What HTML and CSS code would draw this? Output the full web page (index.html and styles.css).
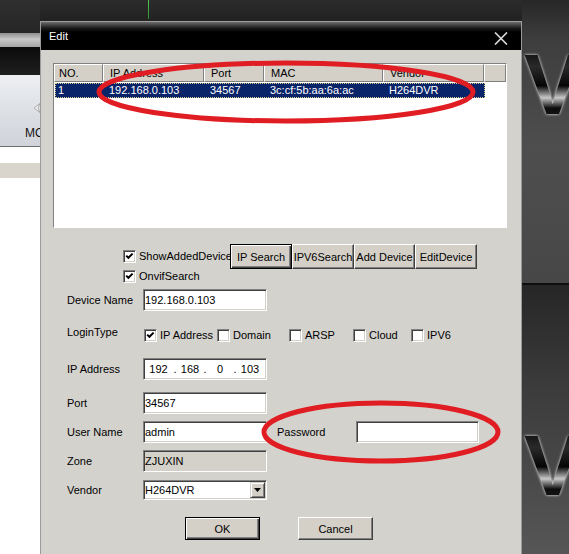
FILE: index.html
```html
<!DOCTYPE html>
<html>
<head>
<meta charset="utf-8">
<title>Edit</title>
<link rel="stylesheet" href="styles.css">
</head>
<body>
<div class="screen">
  <div class="left">
    <div class="l-dark"></div>
    <div class="l-band"></div>
    <div class="l-dark2"></div>
    <div class="l-panel">
      <svg class="l-icon" width="8" height="10" viewBox="0 0 8 10"><polygon points="7,0.5 1,5 7,9.5 5,5" fill="#f2f2f2" stroke="#9c9c9c" stroke-width="0.8"/></svg>
      <span class="l-mo">MO</span>
    </div>
    <div class="l-white"></div>
    <div class="l-stripe"></div>
    <div class="l-rest"></div>
  </div>

  <div class="mid">
    <div class="topgap"><div class="green"></div></div>
    <div class="dialog">
      <div class="titlebar">
        <span class="title">Edit</span>
        <svg class="close" width="14" height="13" viewBox="0 0 14 13"><path d="M1 0.5 L13 12.5 M13 0.5 L1 12.5" stroke="#d6d6d6" stroke-width="1.7" fill="none"/></svg>
      </div>
      <div class="body">
        <div class="list">
          <div class="lhead">
            <div class="hc w1 first">NO.</div>
            <div class="hc w2">IP Address</div>
            <div class="hc w3">Port</div>
            <div class="hc w4">MAC</div>
            <div class="hc w5">Vendor</div>
            <div class="hc w6"></div>
          </div>
          <div class="lrow">
            <div class="rc r1">1</div>
            <div class="rc w2">192.168.0.103</div>
            <div class="rc w3">34567</div>
            <div class="rc w4">3c:cf:5b:aa:6a:ac</div>
            <div class="rc w5">H264DVR</div>
          </div>
        </div>

        <div class="searchrow">
          <div class="chk">
            <span class="cb"><svg width="11" height="11" viewBox="0 0 11 11"><path d="M2.2 4.6 L4.4 6.8 L8.6 2.6" stroke="#000" stroke-width="2" fill="none"/></svg></span>
            <span class="cbl clip">ShowAddedDevice</span>
          </div>
          <button class="btn def b62">IP Search</button>
          <button class="btn b62">IPV6Search</button>
          <button class="btn b61">Add Device</button>
          <button class="btn b62">EditDevice</button>
        </div>
        <div class="onvifrow">
          <div class="chk">
            <span class="cb"><svg width="11" height="11" viewBox="0 0 11 11"><path d="M2.2 4.6 L4.4 6.8 L8.6 2.6" stroke="#000" stroke-width="2" fill="none"/></svg></span>
            <span class="cbl">OnvifSearch</span>
          </div>
        </div>

        <div class="frow r-dev">
          <span class="flabel">Device Name</span>
          <div class="field">192.168.0.103</div>
        </div>

        <div class="frow r-login">
          <span class="flabel top">LoginType</span>
          <div class="opts">
            <div class="chk o1">
              <span class="cb"><svg width="11" height="11" viewBox="0 0 11 11"><path d="M2.2 4.6 L4.4 6.8 L8.6 2.6" stroke="#000" stroke-width="2" fill="none"/></svg></span>
              <span class="cbl clip">IP Address</span>
            </div>
            <div class="chk o2"><span class="cb"></span><span class="cbl">Domain</span></div>
            <div class="chk o3"><span class="cb"></span><span class="cbl">ARSP</span></div>
            <div class="chk o4"><span class="cb"></span><span class="cbl">Cloud</span></div>
            <div class="chk o5"><span class="cb"></span><span class="cbl">IPV6</span></div>
          </div>
        </div>

        <div class="frow r-ip">
          <span class="flabel">IP Address</span>
          <div class="field ipf">
            <span class="oct o-first">192</span><span class="dot">.</span><span class="oct">168</span><span class="dot">.</span><span class="oct">0</span><span class="dot">.</span><span class="oct">103</span>
          </div>
        </div>

        <div class="frow r-port">
          <span class="flabel">Port</span>
          <div class="field">34567</div>
        </div>

        <div class="frow r-user">
          <span class="flabel">User Name</span>
          <div class="field">admin</div>
          <span class="pwlabel">Password</span>
          <div class="field pw"></div>
        </div>

        <div class="frow r-zone">
          <span class="flabel">Zone</span>
          <div class="field dis">ZJUXIN</div>
        </div>

        <div class="frow r-vendor">
          <span class="flabel">Vendor</span>
          <div class="field sel">
            <span>H264DVR</span>
            <span class="dd"><svg width="7" height="4" viewBox="0 0 7 4"><polygon points="0,0 7,0 3.5,4" fill="#000"/></svg></span>
          </div>
        </div>

        <div class="actions">
          <button class="btn def big">OK</button>
          <button class="btn big">Cancel</button>
        </div>
      </div>
    </div>
  </div>

  <div class="right">
    <div class="r-top"><span class="logo">V</span></div>
    <div class="r-line"></div>
    <div class="r-bottom"><span class="logo">V</span></div>
  </div>

  <svg class="marks" width="569" height="554" viewBox="0 0 569 554">
    <ellipse cx="286" cy="92" rx="187" ry="29" fill="none" stroke="#e11d24" stroke-width="5"/>
    <ellipse cx="381" cy="432" rx="117" ry="29" fill="none" stroke="#e11d24" stroke-width="5"/>
  </svg>
</div>
</body>
</html>
```

FILE: styles.css
```css
* { box-sizing: border-box; }
html, body { margin: 0; padding: 0; }
body {
  background: #1e1e1e;
  font-family: "Liberation Sans", Arial, sans-serif;
  font-size: 11px;
  color: #000;
}
.screen {
  position: relative;
  width: 569px;
  height: 554px;
  overflow: hidden;
  display: grid;
  grid-template-columns: 40px 482px 47px;
}

/* left background window */
.left { display: flex; flex-direction: column; overflow: hidden; }
.l-dark { height: 33px; flex: none; background: linear-gradient(#2f2f2f, #262626); }
.l-band { height: 14px; flex: none; background: linear-gradient(#8e8e8e, #c8c8c8 45%, #a4a4a4); }
.l-dark2 { height: 28px; flex: none; background: linear-gradient(#0b0b0b, #1f1f1f); }
.l-panel {
  height: 72px;
  flex: none;
  background: linear-gradient(#eef0f3, #dadde2 60%, #d0d3d9);
  border-bottom: 1px solid #6e6e6e;
  display: flex;
  flex-direction: column;
  justify-content: space-between;
  padding: 28px 0 7px 0;
  white-space: nowrap;
}
.l-icon { display: block; margin-left: 33px; }
.l-mo { display: block; margin-left: 25px; font-size: 12px; line-height: 12px; color: #111; }
.l-white { height: 16px; flex: none; background: #fff; }
.l-stripe { height: 15px; flex: none; background: #d9d5cd; }
.l-rest { flex: 1; background: #fff; }

/* middle */
.mid { display: flex; flex-direction: column; }
.topgap { height: 21px; flex: none; background: linear-gradient(#2c2c2c, #212121); }
.green { width: 1px; height: 19px; margin-left: 108px; background: linear-gradient(#4fd04f, #2f8a2f); }

.dialog {
  flex: 1;
  background: #d4d2cd;
  border-left: 1px solid #9a9a9a;
  border-right: 1px solid #9a9a9a;
  display: flex;
  flex-direction: column;
}
.titlebar {
  height: 29px;
  flex: none;
  background: linear-gradient(#d0d0d0 0, #6c6c6c 1px, #1c1c1c 7px, #000 11px);
  display: flex;
  justify-content: space-between;
  align-items: flex-start;
  padding: 0 13px 0 8px;
}
.title { color: #fff; line-height: 12px; margin-top: 9px; }
.close { display: block; margin-top: 11px; }

.body {
  flex: 1;
  display: flex;
  flex-direction: column;
  padding: 13px 14px 0 12px;
}

/* list view */
.list {
  width: 454px;
  height: 165px;
  flex: none;
  background: #fff;
  border: 1px solid;
  border-color: #808080 #fff #fff #808080;
}
.lhead { display: flex; height: 18px; }
.hc {
  height: 18px;
  background: #d4d0c8;
  border: 1px solid;
  border-color: #fff #808080 #808080 #fff;
  padding-left: 6px;
  line-height: 16px;
  white-space: nowrap;
  overflow: hidden;
}
.hc.first { padding-left: 4px; }
.w1 { width: 49px; }
.w2 { width: 101px; }
.w3 { width: 60px; }
.w4 { width: 119px; }
.w5 { width: 101px; }
.w6 { width: 22px; }
.lrow {
  display: flex;
  width: 430px;
  height: 15px;
  margin: 1px 0 0 1px;
  background: #0a246a;
  color: #fff;
  border: 1px dotted #d9cf8e;
  line-height: 13px;
}
.rc { padding-left: 6px; white-space: nowrap; overflow: hidden; }
.rc.r1 { width: 47px; padding-left: 2px; }

/* checkboxes */
.chk { display: flex; align-items: center; gap: 3px; }
.cb {
  width: 13px;
  height: 13px;
  flex: none;
  background: #fff;
  border: 1px solid;
  border-color: #808080 #fff #fff #808080;
  box-shadow: inset 1px 1px #404040, inset -1px -1px #d4d0c8;
  display: flex;
}
.cb svg { display: block; }
.cbl { white-space: nowrap; line-height: 13px; }
.clip { overflow: hidden; }
.searchrow .clip { width: 91px; }

/* buttons */
.btn {
  font-family: "Liberation Sans", Arial, sans-serif;
  font-size: 11px;
  color: #000;
  background: #d4d0c8;
  border: 1px solid;
  border-color: #fff #404040 #404040 #fff;
  box-shadow: inset -1px -1px #808080;
  padding: 0;
  height: 25px;
  white-space: nowrap;
}
.btn.def {
  border-color: #000;
  box-shadow: inset 1px 1px #fff, inset -1px -1px #404040, inset -2px -2px #808080;
}
.b62 { width: 62px; }
.b61 { width: 61px; }

.searchrow {
  display: flex;
  align-items: center;
  height: 25px;
  margin: 16px 0 0 70px;
  flex: none;
}
.onvifrow {
  display: flex;
  align-items: center;
  height: 15px;
  margin-left: 70px;
  flex: none;
}

/* form */
.frow {
  display: flex;
  align-items: center;
  height: 22px;
  margin-left: 14px;
  flex: none;
}
.flabel { width: 76px; flex: none; white-space: nowrap; }
.flabel.top { align-self: flex-start; line-height: 14px; }
.field {
  width: 124px;
  height: 100%;
  flex: none;
  background: #fff;
  border: 1px solid;
  border-color: #808080 #fff #fff #808080;
  box-shadow: inset 1px 1px #404040, inset -1px -1px #d4d0c8;
  padding-left: 1px;
  display: flex;
  align-items: center;
  white-space: nowrap;
  overflow: hidden;
}
.field.dis { background: #d4d1ca; }
.field.pw { width: 123px; }
.pwlabel { margin-left: 10px; width: 79px; flex: none; }

.r-dev { margin-top: 5px; }
.r-login { margin-top: 14px; height: 20px; }
.r-ip { margin-top: 13px; }
.r-port { margin-top: 12px; }
.r-user { margin-top: 7px; }
.r-zone { margin-top: 7px; }
.r-vendor { margin-top: 8px; height: 20px; }

.opts { display: flex; align-items: center; margin-left: 1px; }
.o1 { width: 73px; }
.o1 .clip { width: 53px; }
.o2 { width: 72px; }
.o3 { width: 64px; }
.o4 { width: 58px; }

.ipf { padding-left: 0; }
.oct { width: 26px; text-align: center; }
.oct.o-first { width: 29px; }
.dot { width: 4px; text-align: center; }

.field.sel { justify-content: space-between; padding-right: 1px; }
.dd {
  width: 15px;
  height: 16px;
  background: #d4d0c8;
  border: 1px solid;
  border-color: #d4d0c8 #404040 #404040 #d4d0c8;
  box-shadow: inset 1px 1px #fff, inset -1px -1px #808080;
  display: flex;
  align-items: center;
  justify-content: center;
}
.dd svg { display: block; }

.actions {
  display: flex;
  gap: 38px;
  margin: 17px 0 0 132px;
  flex: none;
}
.btn.big { width: 75px; height: 23px; }

/* right background */
.right { display: flex; flex-direction: column; overflow: hidden; }
.r-top {
  height: 283px;
  flex: none;
  padding-top: 41px;
  background: linear-gradient(#272727 0, #3e3e3e 40px, #4e4e4e 150px, #474747 283px);
}
.r-line { height: 2px; flex: none; background: #0e0e0e; }
.r-bottom {
  flex: 1;
  padding-top: 137px;
  background: linear-gradient(#262626, #3a3a3a 35%, #565656 100%);
}
.logo {
  display: block;
  margin-left: 2px;
  font-family: "Liberation Sans", Arial, sans-serif;
  font-weight: bold;
  font-size: 86px;
  line-height: 1;
  white-space: nowrap;
  background: linear-gradient(#0e0e0e 10%, #2a2a2a 30%, #050505 52%, #c8c8c8 66%, #0c0c0c 78%, #1c1c1c 95%);
  -webkit-background-clip: text;
  background-clip: text;
  color: transparent;
  filter: drop-shadow(0 0 1.5px #ffffff);
}

/* red annotation marks */
.marks { position: absolute; left: 0; top: 0; pointer-events: none; }
```
